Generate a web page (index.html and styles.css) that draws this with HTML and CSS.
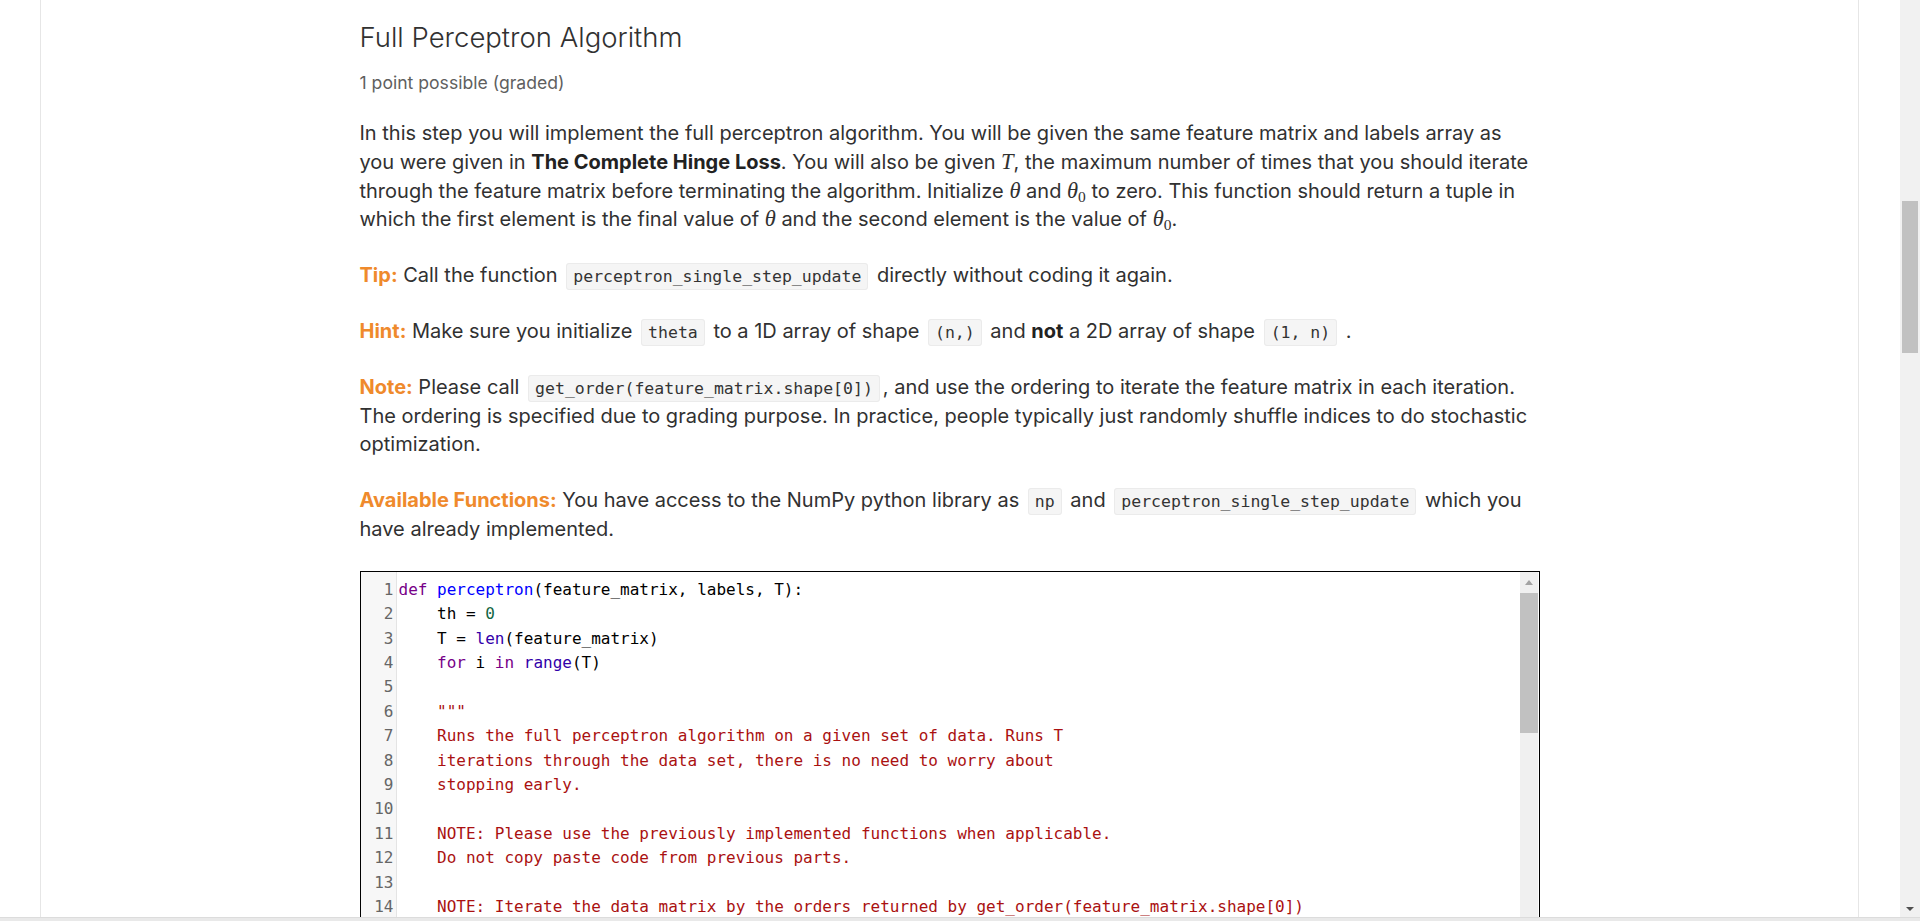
FILE: index.html
```html
<!DOCTYPE html>
<html lang="en">
<head>
<meta charset="utf-8">
<title>Full Perceptron Algorithm</title>
<link rel="stylesheet" href="styles.css">
</head>
<body>
<div class="window">
  <div class="viewport">
    <div class="main">
      <div class="frame">
        <div class="content">
          <h2 class="title">Full Perceptron Algorithm</h2>
          <div class="subtitle">1 point possible (graded)</div>

          <p>In this step you will implement the full perceptron algorithm. You will be given the same feature matrix and labels array as you were given in <b>The Complete Hinge Loss</b>. You will also be given <span class="math">T</span>, the maximum number of times that you should iterate through the feature matrix before terminating the algorithm. Initialize <span class="math">θ</span> and <span class="math">θ<span class="sub">0</span></span> to zero. This function should return a tuple in which the first element is the final value of <span class="math">θ</span> and the second element is the value of <span class="math">θ<span class="sub">0</span></span>.</p>

          <p><span class="label">Tip:</span> Call the function <code>perceptron_single_step_update</code> directly without coding it again.</p>

          <p><span class="label">Hint:</span> Make sure you initialize <code>theta</code> to a 1D array of shape <code>(n,)</code> and <b>not</b> a 2D array of shape <code>(1, n)</code> .</p>

          <p><span class="label">Note:</span> Please call <code>get_order(feature_matrix.shape[0])</code>, and use the ordering to iterate the feature matrix in each iteration. The ordering is specified due to grading purpose. In practice, people typically just randomly shuffle indices to do stochastic optimization.</p>

          <p><span class="label">Available Functions:</span> You have access to the NumPy python library as <code>np</code> and <code>perceptron_single_step_update</code> which you have already implemented.</p>

          <div class="editor">
            <div class="gutter">
              <div>1</div><div>2</div><div>3</div><div>4</div><div>5</div><div>6</div><div>7</div>
              <div>8</div><div>9</div><div>10</div><div>11</div><div>12</div><div>13</div><div>14</div>
            </div>
            <div class="code">
              <div class="ln"><span class="kw">def</span> <span class="df">perceptron</span>(feature_matrix, labels, T):</div>
              <div class="ln">    th = <span class="nm">0</span></div>
              <div class="ln">    T = <span class="bi">len</span>(feature_matrix)</div>
              <div class="ln">    <span class="kw">for</span> i <span class="kw">in</span> <span class="bi">range</span>(T)</div>
              <div class="ln"> </div>
              <div class="ln str">    """</div>
              <div class="ln str">    Runs the full perceptron algorithm on a given set of data. Runs T</div>
              <div class="ln str">    iterations through the data set, there is no need to worry about</div>
              <div class="ln str">    stopping early.</div>
              <div class="ln str"> </div>
              <div class="ln str">    NOTE: Please use the previously implemented functions when applicable.</div>
              <div class="ln str">    Do not copy paste code from previous parts.</div>
              <div class="ln str"> </div>
              <div class="ln str">    NOTE: Iterate the data matrix by the orders returned by get_order(feature_matrix.shape[0])</div>
            </div>
            <div class="escroll">
              <div class="eup"><span class="tri-up"></span></div>
              <div class="ethumb"></div>
            </div>
          </div>
        </div>
      </div>
    </div>
    <div class="vscroll">
      <div class="vtrack">
        <div class="vthumb"></div>
      </div>
      <div class="vdown"><span class="tri-down"></span></div>
    </div>
  </div>
  <div class="hscroll"></div>
</div>
</body>
</html>
```
FILE: styles.css
```css
html, body {
  margin: 0;
  padding: 0;
  height: 100%;
  overflow: hidden;
  background: #ffffff;
}

body {
  font-family: Inter, "Noto Sans", sans-serif;
  color: #313131;
}

.window {
  display: flex;
  flex-direction: column;
  height: 921px;
}

.viewport {
  display: flex;
  height: 917px;
}

.main {
  flex: 1;
  overflow: hidden;
}

.frame {
  height: 100%;
  margin: 0 41px 0 40px;
  border-left: 1px solid #e6e6e6;
  border-right: 1px solid #e6e6e6;
}

.content {
  width: 1180px;
  margin: 0 auto;
  padding-top: 20px;
}

.title {
  margin: 0;
  font-size: 27.5px;
  line-height: 34px;
  font-weight: 300;
  color: #313131;
}

.subtitle {
  margin-top: 17px;
  font-size: 17.6px;
  line-height: 24px;
  color: #5f5f5f;
}

p {
  max-width: 1177px;
  margin: 0 0 27px;
  font-size: 20px;
  line-height: 28.8px;
}

.subtitle + p {
  margin-top: 24px;
}

b {
  font-weight: 700;
  color: #222;
}

.label {
  font-weight: 700;
  color: #ef8a2c;
}

.math {
  font-family: "Liberation Serif", "DejaVu Serif", serif;
  font-style: italic;
  font-size: 22.5px;
  line-height: 1;
}

.math .sub {
  font-style: normal;
  font-size: 15.5px;
  vertical-align: -4px;
  line-height: 0;
}

code {
  font-family: "DejaVu Sans Mono", "Liberation Mono", monospace;
  font-size: 16.5px;
  line-height: 1;
  color: #333;
  background: #f5f5f5;
  border: 1px solid #ebebeb;
  border-radius: 3px;
  padding: 3px 6px;
  margin: 0 3px;
}

/* code editor */
.editor {
  display: flex;
  height: 420px;
  border: 1px solid #000;
  font-family: "DejaVu Sans Mono", "Liberation Mono", monospace;
  font-size: 16px;
  line-height: 24.4px;
}

.gutter {
  width: 33px;
  padding: 6px 2px 0 0;
  background: #f7f7f7;
  border-right: 1px solid #e4e4e4;
  color: #666;
  text-align: right;
}

.code {
  flex: 1;
  padding: 6px 0 0 2px;
  color: #000;
  overflow: hidden;
}

.ln {
  white-space: pre;
  height: 24.4px;
}

.kw { color: #770088; }
.df { color: #0000ff; }
.bi { color: #3300aa; }
.nm { color: #116644; }
.str { color: #aa1111; }

.escroll {
  width: 18px;
  margin-right: 1px;
  background: #f0f0f0;
  display: flex;
  flex-direction: column;
}

.eup {
  height: 21px;
  display: flex;
  align-items: center;
  justify-content: center;
}

.tri-up {
  width: 0;
  height: 0;
  border-left: 4px solid transparent;
  border-right: 4px solid transparent;
  border-bottom: 5px solid #a3a3a3;
}

.ethumb {
  height: 140px;
  background: #c1c1c1;
}

/* page scrollbar */
.vscroll {
  width: 20px;
  background: #f1f1f1;
  display: flex;
  flex-direction: column;
}

.vtrack {
  flex: 1;
  padding-top: 201px;
}

.vthumb {
  height: 152px;
  margin: 0 2px;
  background: #c1c1c1;
}

.vdown {
  height: 17px;
  display: flex;
  align-items: center;
  justify-content: center;
}

.tri-down {
  width: 0;
  height: 0;
  border-left: 4px solid transparent;
  border-right: 4px solid transparent;
  border-top: 4px solid #505050;
}

.hscroll {
  height: 4px;
  background: #e9e9e9;
  border-top: 1px solid #dcdcdc;
  box-sizing: border-box;
}
```
